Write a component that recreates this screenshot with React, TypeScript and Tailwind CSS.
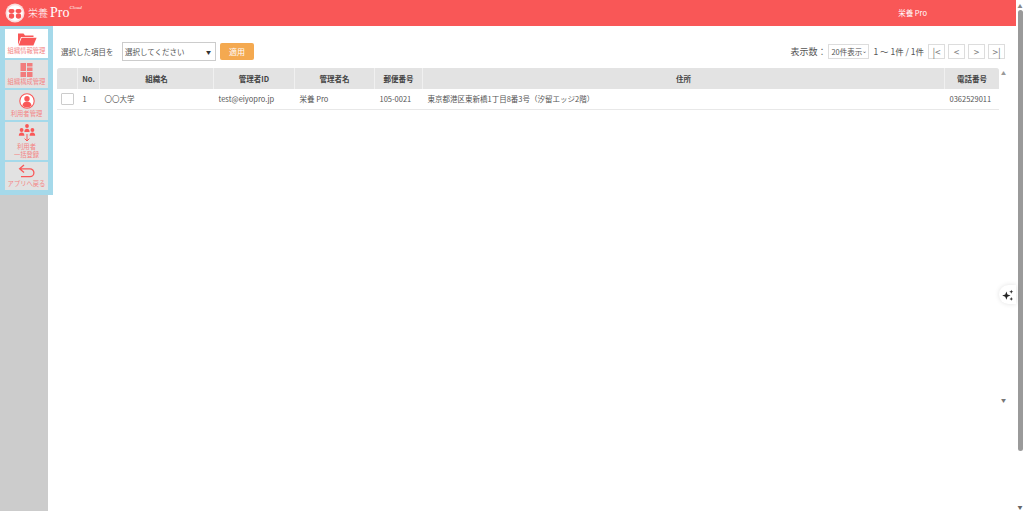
const font = { fontFamily: '"Noto Sans CJK JP", "Noto Sans", sans-serif' };

const columns = [
  { label: "", width: "w-[20px]", value: "" },
  { label: "No.", width: "w-[21px]", value: "1" },
  { label: "組織名", width: "w-[113px]", value: "〇〇大学" },
  { label: "管理者ID", width: "w-[80px]", value: "test@eiyopro.jp" },
  { label: "管理者名", width: "w-[79px]", value: "栄養 Pro" },
  { label: "郵便番号", width: "w-[47px]", value: "105-0021" },
  { label: "住所", width: "w-[521px]", value: "東京都港区東新橋1丁目8番3号（汐留エッジ2階）" },
  { label: "電話番号", width: "w-[54px]", value: "0362529011" },
];

function Logo() {
  return (
    <svg width="20" height="20" viewBox="0 0 20 20" className="shrink-0">
      <circle cx="10" cy="10" r="9.5" fill="#fbdcdc" />
      <circle cx="10" cy="10" r="7.8" fill="#fff" />
      <rect x="3.5" y="6" width="6" height="4" rx="2" fill="#f95757" />
      <rect x="10.5" y="6" width="6" height="4" rx="2" fill="#f95757" />
      <circle cx="6.5" cy="13" r="2.7" fill="#f95757" />
      <circle cx="13.5" cy="13" r="2.7" fill="#f95757" />
    </svg>
  );
}

function FolderIcon() {
  return (
    <svg width="20" height="14" viewBox="0 0 20 14">
      <path d="M1 13V1.5h5.5l1.5 2h8.5V5H4L1 13Z" fill="#f95757" />
      <path d="M4.6 5.8H19.6L16.4 13.6H1.6Z" fill="#f95757" />
    </svg>
  );
}

function LayoutIcon() {
  return (
    <svg width="13" height="14" viewBox="0 0 13 14">
      <rect x="0.5" y="0" width="5.5" height="8" fill="#f27c7c" />
      <rect x="7" y="0" width="5.5" height="3.5" fill="#f27c7c" />
      <rect x="7" y="4.5" width="5.5" height="3.5" fill="#f27c7c" />
      <rect x="0.5" y="9" width="5.5" height="5" fill="#f27c7c" />
      <rect x="7" y="9" width="5.5" height="5" fill="#f27c7c" />
    </svg>
  );
}

function UserIcon() {
  return (
    <svg width="16" height="16" viewBox="0 0 16 16">
      <circle cx="8" cy="8" r="7.2" fill="#fff" stroke="#f95757" strokeWidth="1.1" />
      <circle cx="8" cy="5.8" r="2.7" fill="#f95757" />
      <path d="M3.4 12.6c.4-2.8 2.2-4 4.6-4s4.2 1.2 4.6 4a6.3 6.3 0 0 1-9.2 0Z" fill="#f95757" />
    </svg>
  );
}

function BulkIcon() {
  return (
    <svg width="18" height="18" viewBox="0 0 18 18">
      <circle cx="9" cy="2" r="1.9" fill="#f95757" />
      <path d="M6.4 8c0-2.2 1-3.2 2.6-3.2s2.6 1 2.6 3.2Z" fill="#f95757" />
      <circle cx="3.6" cy="6" r="1.9" fill="#f95757" />
      <path d="M.8 11.8c0-2.2 1.2-3.2 2.8-3.2s2.8 1 2.8 3.2Z" fill="#f95757" />
      <circle cx="14.4" cy="6" r="1.9" fill="#f95757" />
      <path d="M11.6 11.8c0-2.2 1.2-3.2 2.8-3.2s2.8 1 2.8 3.2Z" fill="#f95757" />
      <path d="M9 10v7M6.6 14.6 9 17l2.4-2.4" fill="none" stroke="#f95757" strokeWidth="1" />
    </svg>
  );
}

function BackIcon() {
  return (
    <svg width="18" height="15" viewBox="0 0 18 15">
      <path
        d="M6 1 1.6 4.8 6 8.6M1.6 4.8H12a3.9 3.9 0 0 1 0 7.8H3"
        fill="none"
        stroke="#f95757"
        strokeWidth="1.3"
      />
    </svg>
  );
}

function MenuItem({
  label,
  icon,
  active,
  className,
}: {
  label: string[];
  icon: React.ReactNode;
  active?: boolean;
  className: string;
}) {
  return (
    <div
      className={`flex flex-col items-center justify-center ${className} ${active ? "bg-white" : "bg-[#e2e2e2]"}`}
    >
      {icon}
      <div className="mt-px text-center text-[6.3px] leading-[8px] text-[#f48585]">
        {label.map((line) => (
          <div key={line} className="whitespace-nowrap">
            {line}
          </div>
        ))}
      </div>
    </div>
  );
}

function PageButton({ label }: { label: string }) {
  return (
    <div className="flex h-[15px] w-[17px] items-center justify-center border border-[#ddd] text-[10px] leading-none text-[#777]">
      {label}
    </div>
  );
}

export default function App() {
  return (
    <div className="flex h-[511px] w-[1024px] overflow-hidden bg-white" style={font}>
      <div className="flex w-[1016px] flex-col">
        <header className="flex h-[26px] shrink-0 items-center justify-between bg-[#f95757] pl-[5px] text-white">
          <div className="flex items-center gap-[3px]">
            <Logo />
            <div className="flex items-start">
              <span className="text-[10px] font-light leading-[14px]">栄養</span>
              <span
                className="ml-[2px] text-[14px] leading-[14px]"
                style={{ fontFamily: '"Liberation Serif", serif' }}
              >
                Pro
              </span>
              <span
                className="-mt-[2px] text-[5px] italic leading-[7px]"
                style={{ fontFamily: '"Liberation Serif", serif' }}
              >
                Cloud
              </span>
            </div>
          </div>
          <span className="mr-[89px] text-[7.5px]">栄養 Pro</span>
        </header>

        <div className="relative flex min-h-0 flex-1">
          <aside className="w-[48px] shrink-0 bg-[#cccccc]" />

          {/* floating side menu */}
          <nav className="absolute left-0 top-0 flex h-[169px] w-[53px] flex-col gap-[2px] bg-[#a5d9ea] pl-[5px] pr-[5px] pt-[3px]">
            <MenuItem active className="h-[29px]" label={["組織情報管理"]} icon={<FolderIcon />} />
            <MenuItem className="h-[28px]" label={["組織構成管理"]} icon={<LayoutIcon />} />
            <MenuItem className="h-[30px]" label={["利用者管理"]} icon={<UserIcon />} />
            <MenuItem className="h-[38px]" label={["利用者", "一括登録"]} icon={<BulkIcon />} />
            <MenuItem className="h-[28px]" label={["アプリへ戻る"]} icon={<BackIcon />} />
          </nav>

          <main className="relative min-w-0 flex-1 pl-[9px] pt-[16px] text-[#555]">
            <div className="flex h-[19px] items-center pr-[11px]">
              <span className="w-[65px] pl-[4px] text-[7.5px]">選択した項目を</span>
              <div className="flex h-[19px] w-[94px] items-center justify-between border border-[#ccc] pl-[2px] pr-[4px] text-[7.5px]">
                <span>選択してください</span>
                <span className="text-[5px] text-[#333]">▼</span>
              </div>
              <div className="ml-[4px] flex h-[17px] w-[34px] items-center justify-center rounded-[2px] bg-[#f4a950] text-[8px] text-white">
                適用
              </div>

              <span className="ml-auto text-[9px]">表示数：</span>
              <div className="ml-[2px] flex h-[15px] w-[41px] items-center justify-between border border-[#ddd] pl-[2px] pr-px text-[7.5px]">
                <span className="whitespace-nowrap">20件表示</span>
                <span className="mb-[2px] text-[6px] leading-none">⌄</span>
              </div>
              <span className="ml-[4px] text-[8.5px]">1 〜 1件 / 1件</span>
              <div className="ml-[4px] flex gap-[3px]">
                <PageButton label="|<" />
                <PageButton label="<" />
                <PageButton label=">" />
                <PageButton label=">|" />
              </div>
            </div>

            <div className="mt-[7px] w-[942px] text-[7.5px]">
              <div className="flex h-[21px] gap-px overflow-hidden rounded-t-[3px] bg-[#f0f0f0]">
                {columns.map((column) => (
                  <div
                    key={column.label}
                    className={`flex shrink-0 items-center justify-center bg-[#e3e3e3] font-bold text-[#444] ${column.width}`}
                  >
                    {column.label}
                  </div>
                ))}
              </div>
              <div className="flex h-[21px] gap-px border-b border-[#e8e8e8]">
                {columns.map((column, index) => (
                  <div
                    key={column.label}
                    className={`flex shrink-0 items-center whitespace-nowrap ${index === 0 ? "pl-[4px]" : "pl-[4.5px]"} ${column.width}`}
                  >
                    {index === 0 && (
                      <div className="h-[12px] w-[13px] rounded-[1px] border border-[#ccc]" />
                    )}
                    {index > 0 && column.value}
                  </div>
                ))}
              </div>
            </div>

            {/* inner scroll arrows */}
            <span className="absolute left-[953px] top-[43px] text-[5px] text-[#999]">▲</span>
            <span className="absolute left-[953px] top-[370px] text-[5px] text-[#777]">▼</span>

            {/* floating assistant button */}
            <div className="absolute right-0 top-[259px] flex h-[19px] w-[17px] items-center justify-center rounded-l-full bg-white shadow-[0_0_5px_rgba(0,0,0,0.12)]">
              <svg width="12" height="12" viewBox="0 0 11 11">
                <path d="M4 2.2 5 5l2.8 1L5 7 4 9.8 3 7 .2 6 3 5Z" fill="#222" />
                <path d="M8.5.6 9 2l1.4.5L9 3l-.5 1.4L8 3l-1.4-.5L8 2Z" fill="#222" />
                <path d="M8.5 7.4 9 8.6l1.2.5-1.2.5-.5 1.2-.5-1.2-1.2-.5L8 8.6Z" fill="#222" />
              </svg>
            </div>
          </main>
        </div>
      </div>

      {/* page scrollbar */}
      <div className="flex w-[8px] shrink-0 flex-col items-center bg-white">
        <span className="mt-[1px] h-[9px] text-[5px] leading-[9px] text-[#888]">▲</span>
        <div className="h-[441px] w-[5px] rounded-full bg-[#9a9a9a]" />
        <span className="mt-auto h-[9px] text-[5px] leading-[9px] text-[#666]">▼</span>
      </div>
    </div>
  );
}
